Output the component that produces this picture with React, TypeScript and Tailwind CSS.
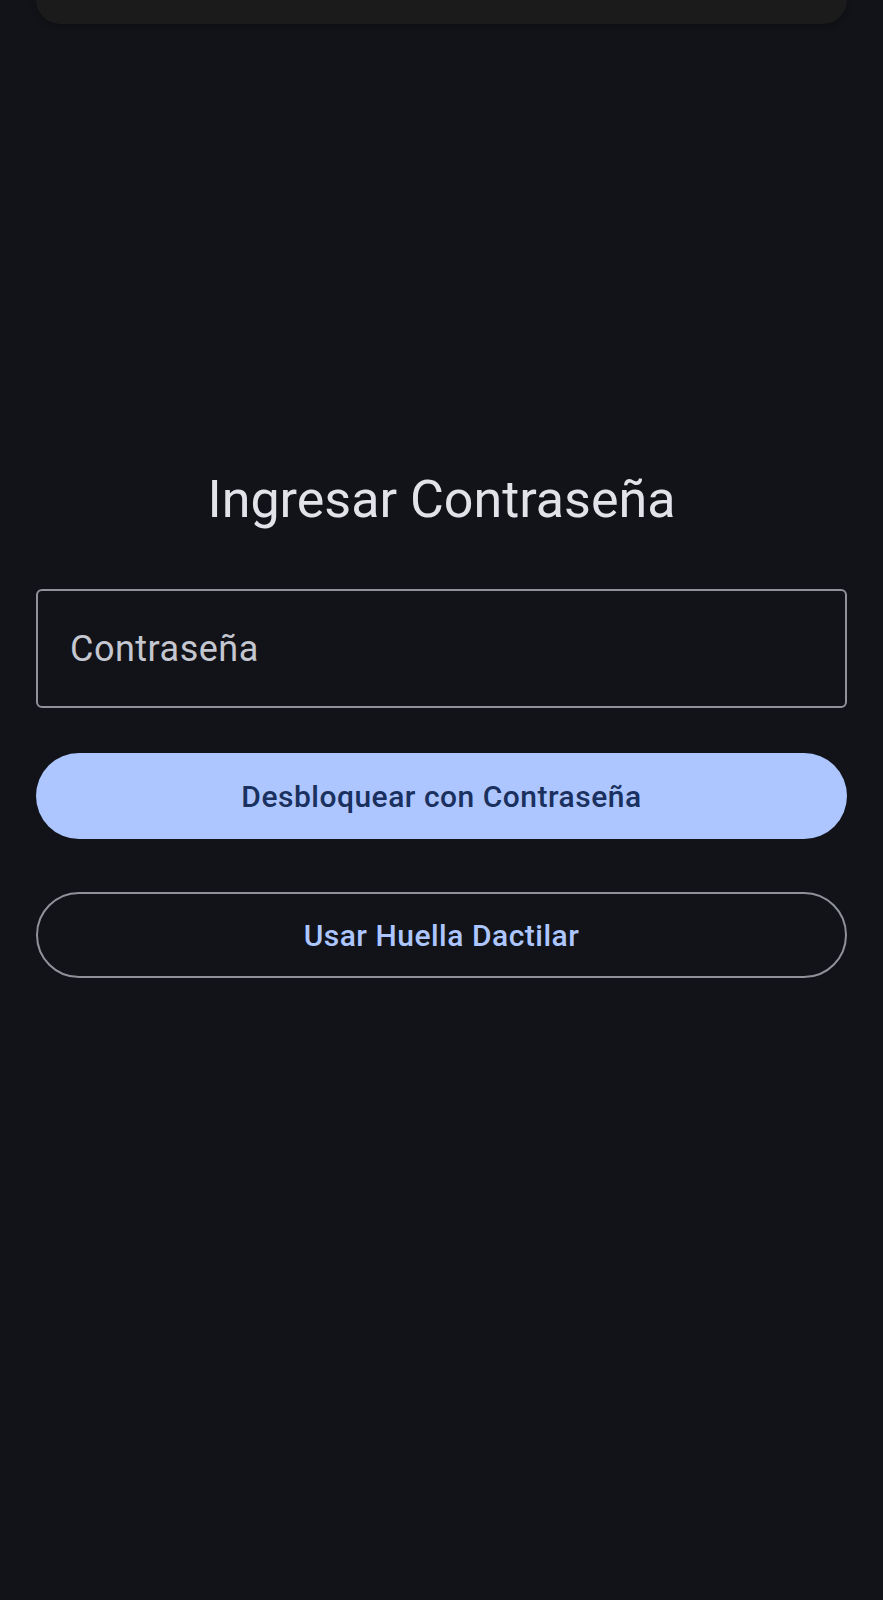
import { useState } from "react";

export default function App() {
  const [pwd, setPwd] = useState("");
  return (
    <div className="min-h-[1600px] w-full bg-[#111318] font-['Roboto','Liberation_Sans',sans-serif]">
      {/* sheet peeking at the top */}
      <div className="mx-[36px] h-[24px] rounded-b-[24px] bg-[#1b1b1c] shadow-[0_2px_6px_rgba(0,0,0,0.25)]" />

      <div className="px-[36px] pt-[446px]">
        <h1 className="text-center text-[52px] leading-[60px] font-normal text-[#e2e2e9]">
          Ingresar Contraseña
        </h1>

        <div className="mt-[59px] h-[119px] rounded-[6px] border-2 border-[#909299] flex items-center px-[32px]">
          <input
            type="password"
            value={pwd}
            onChange={(e) => setPwd(e.target.value)}
            placeholder="Contraseña"
            className="w-full bg-transparent text-[36px] tracking-[0.5px] text-[#e2e2e9] placeholder:text-[#c4c6d0] outline-none"
          />
        </div>

        <button className="mt-[45px] w-full h-[86px] rounded-full bg-[#adc6ff] text-[30px] tracking-[0.5px] font-medium text-[#1a305e]">
          Desbloquear con Contraseña
        </button>

        <button className="mt-[53px] w-full h-[86px] rounded-full border-2 border-[#909299] text-[30px] tracking-[0.5px] font-medium text-[#adc6ff]">
          Usar Huella Dactilar
        </button>
      </div>
    </div>
  );
}
